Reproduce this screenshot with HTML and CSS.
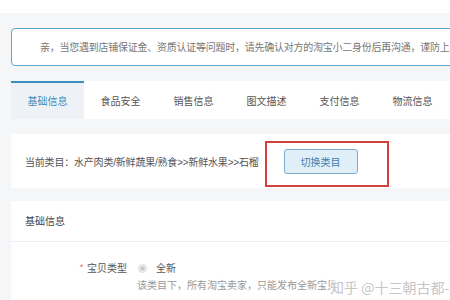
FILE: index.html
```html
<!DOCTYPE html>
<html lang="zh-CN">
<head>
    <meta charset="UTF-8">
    <title>发布宝贝</title>
    <link rel="stylesheet" href="styles.css">
</head>
<body>
    <div class="top-strip"></div>
    <div class="main">
        <div class="notice">亲，当您遇到店铺保证金、资质认证等问题时，请先确认对方的淘宝小二身份后再沟通，谨防上当受骗。</div>

        <ul class="tabs">
            <li class="tab active">基础信息</li>
            <li class="tab">食品安全</li>
            <li class="tab">销售信息</li>
            <li class="tab">图文描述</li>
            <li class="tab">支付信息</li>
            <li class="tab">物流信息</li>
        </ul>

        <div class="card category">
            <span class="cat-text">当前类目：水产肉类/新鲜蔬果/熟食&gt;&gt;新鲜水果&gt;&gt;石榴</span>
            <div class="switch-wrap">
                <button class="switch-btn">切换类目</button>
                <span class="mark"></span>
            </div>
        </div>

        <div class="card basic">
            <div class="card-title">基础信息</div>
            <div class="form-row">
                <div class="form-label"><span class="req">*</span>宝贝类型</div>
                <div class="form-field">
                    <label class="radio"><span class="dot"></span>全新</label>
                    <p class="hint">该类目下，所有淘宝卖家，只能发布全新宝贝</p>
                </div>
            </div>
            <div class="watermark">知乎 @十三朝古都-长安</div>
        </div>
    </div>
</body>
</html>
```

FILE: styles.css
```css
body {
    margin: 0;
    width: 450px;
    height: 300px;
    overflow: hidden;
    background-color: #f4f6f8;
    font-family: "Noto Sans CJK SC", "Liberation Sans", sans-serif;
    font-size: 10px;
    color: #555;
}
.top-strip {
    height: 13px;
    background-color: #fff;
}
.main {
    width: 520px;
    padding: 15px 0 0 11px;
}
.notice {
    height: 36px;
    line-height: 36px;
    padding-left: 28px;
    background-color: #fff;
    border: 1.5px solid #5fa6cc;
    border-radius: 4px;
    color: #777;
    letter-spacing: -0.25px;
    white-space: nowrap;
    overflow: hidden;
}
.tabs {
    display: flex;
    margin: 15px 0 0 0;
    padding: 0;
    list-style: none;
    background-color: #fff;
    height: 38px;
}
.tab {
    width: 73px;
    height: 36px;
    line-height: 36px;
    border-top: 2px solid transparent;
    text-align: center;
    color: #555;
}
.tab.active {
    border-top-color: #3a8fbf;
    background-color: #eef2f6;
    color: #3b8cbc;
}
.card {
    background-color: #fff;
}
.category {
    display: flex;
    align-items: center;
    height: 54px;
    margin-top: 15px;
    padding-left: 14px;
}
.cat-text {
    font-family: "Liberation Sans", "Noto Sans CJK SC", sans-serif;
    letter-spacing: -0.2px;
    color: #555;
}
.switch-wrap {
    position: relative;
    margin-left: 25px;
}
.switch-btn {
    display: block;
    width: 74px;
    height: 25px;
    background-color: #e0eef8;
    border: 1px solid #7eaecb;
    border-radius: 3px;
    font-family: "Noto Sans CJK SC", sans-serif;
    font-size: 10px;
    color: #3d7fae;
    padding: 0;
}
.mark {
    position: absolute;
    left: -19px;
    top: -8px;
    width: 124px;
    height: 46px;
    border: 2px solid #d0413f;
    box-sizing: border-box;
}
.basic {
    position: relative;
    margin-top: 13px;
    height: 120px;
}
.card-title {
    height: 40px;
    line-height: 40px;
    padding-left: 14px;
    border-bottom: 1px solid #eceef1;
    color: #444;
}
.form-row {
    display: flex;
    padding-top: 19px;
}
.form-label {
    width: 116px;
    text-align: right;
    line-height: 14px;
    color: #555;
}
.req {
    color: #f07a8a;
    margin-right: 3px;
}
.form-field {
    margin-left: 10px;
}
.radio {
    display: flex;
    align-items: center;
    line-height: 14px;
    color: #555;
}
.dot {
    width: 7px;
    height: 7px;
    border: 1px solid #d8d8d8;
    border-radius: 50%;
    margin: 0 9px 0 1px;
    background: radial-gradient(circle, #c8c8c8 0 2px, #f4f4f4 2.5px);
}
.hint {
    margin: 3px 0 0 0;
    line-height: 14px;
    color: #999;
    white-space: nowrap;
}
.watermark {
    position: absolute;
    left: 319px;
    top: 76px;
    font-size: 14px;
    color: #c6c6c6;
    white-space: nowrap;
    background-color: rgba(255, 255, 255, 0.6);
}
```
